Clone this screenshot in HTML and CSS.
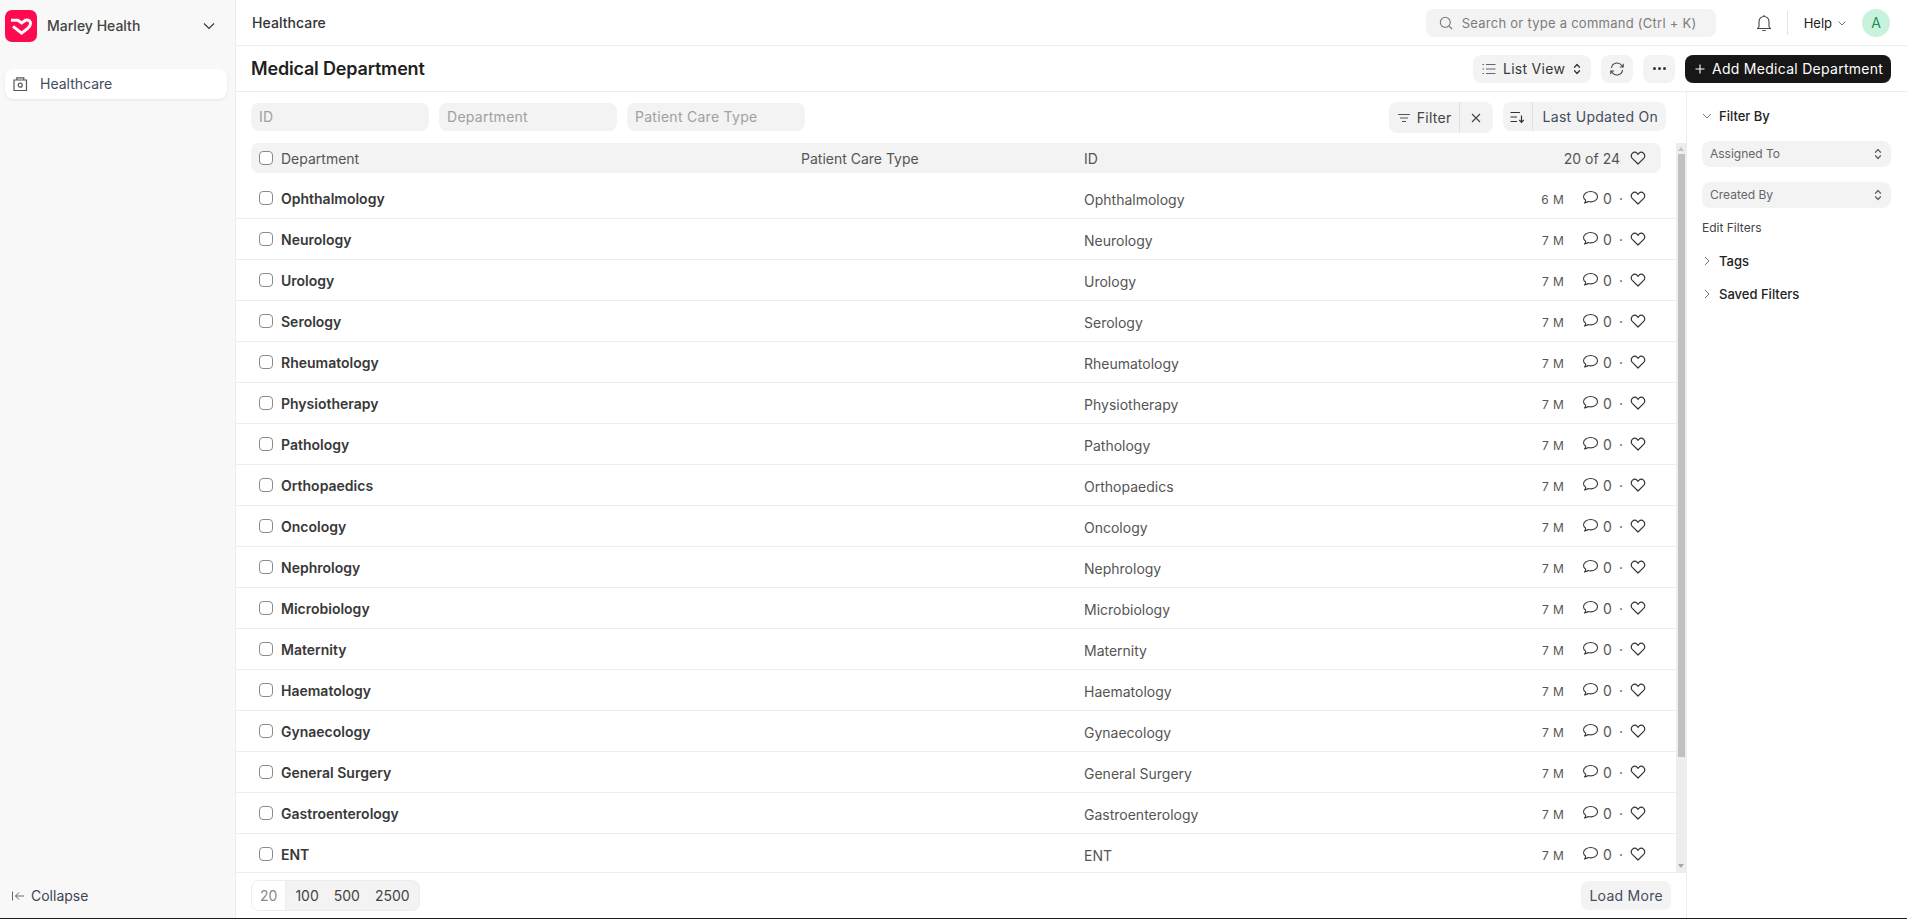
FILE: index.html
```html
<!DOCTYPE html>
<html lang="en">
<head>
<meta charset="utf-8">
<title>Medical Department</title>
<link rel="stylesheet" href="styles.css">
</head>
<body>
<svg class="defs" width="0" height="0" aria-hidden="true">
  <symbol id="i-heart" viewBox="0 0 16 16"><path d="M8 14 2.300 8.400a3.500 3.500 0 0 1 0-5 3.500 3.500 0 0 1 4.900 0l.8.900.8-.9a3.500 3.500 0 0 1 4.900 0 3.500 3.500 0 0 1 0 5L8 14Z" fill="none" stroke="currentColor" stroke-width="1.200" stroke-linejoin="round"/></symbol>
  <symbol id="i-comment" viewBox="0 0 16 16"><path d="M8.700 1.500c3.700 0 6.800 2.300 6.800 5.200s-3.100 5.200-6.800 5.200c-.9 0-1.700-.1-2.500-.4-.8.8-2 1.300-3.700 1.400.8-.9 1.200-1.800 1.200-2.700C2.500 9.300 1.500 8.100 1.500 6.700c0-2.900 3.500-5.200 7.200-5.200Z" fill="none" stroke="currentColor" stroke-width="1.100" stroke-linejoin="round"/></symbol>
  <symbol id="i-updown" viewBox="0 0 12 16"><path d="M3.500 6.200 6 3.500l2.500 2.700M3.500 9.800 6 12.500l2.500-2.700" fill="none" stroke="currentColor" stroke-width="1.300" stroke-linecap="round" stroke-linejoin="round"/></symbol>
  <symbol id="i-check" viewBox="0 0 14 14"><rect x=".5" y=".5" width="13" height="13" rx="3.500" fill="#fff" stroke="#8a8a8a"/></symbol>
</svg>

<div class="app">
  <aside class="sidebar">
    <div class="brand">
      <span class="logo">
        <svg width="32" height="32" viewBox="0 0 32 32"><path d="M6 10.300h6.800l3.900 2.700 3.800-2.800c3.200-.6 5.300 1 5 3.700-.2 1.900-1.500 3.300-3.100 4.700l-5.800 4.600-8.600-6.900" fill="none" stroke="#fff" stroke-width="3"/></svg>
      </span>
      <span class="brand-name">Marley Health</span>
      <svg class="brand-caret" width="16" height="16" viewBox="0 0 16 16"><path d="M3 5.500 8 10.500l5-5" fill="none" stroke="#333" stroke-width="1.100"/></svg>
    </div>
    <div class="side-item">
      <svg width="16" height="16" viewBox="0 0 16 16"><path d="M2 4h12.500v10.500H2zM4.800 4V1.800h7V4" fill="none" stroke="#555" stroke-width="1.200"/><circle cx="8.200" cy="9.200" r="2" fill="none" stroke="#555" stroke-width="1.200"/></svg>
      <span>Healthcare</span>
    </div>
    <div class="collapse">
      <svg width="14" height="14" viewBox="0 0 14 14"><path d="M1.500 2.500v9M13 7H4.500M8 3.500 4.500 7 8 10.500" fill="none" stroke="#666" stroke-width="1"/></svg>
      <span>Collapse</span>
    </div>
  </aside>

  <main class="main">
    <header class="navbar">
      <div class="crumb">Healthcare</div>
      <div class="search">
        <svg width="16" height="16" viewBox="0 0 16 16"><circle cx="7.300" cy="7.300" r="5" fill="none" stroke="#777" stroke-width="1.100"/><path d="m11 11 3 3" stroke="#777" stroke-width="1.100"/></svg>
        <span>Search or type a command (Ctrl + K)</span>
      </div>
      <svg class="bell" width="16" height="18" viewBox="0 0 16 18"><path d="M3 12.500V7.500a5 5 0 0 1 10 0v5l1.500 2h-13L3 12.500ZM6.300 16.500h3.400M8 1v1.500" fill="none" stroke="#444" stroke-width="1.100" stroke-linejoin="round"/></svg>
      <span class="nav-sep"></span>
      <span class="help">Help</span>
      <svg class="help-caret" width="10" height="10" viewBox="0 0 10 10"><path d="M1.500 3.500 5 7l3.500-3.500" fill="none" stroke="#666" stroke-width=".9"/></svg>
      <span class="avatar">A</span>
    </header>

    <div class="pagehead">
      <h1>Medical Department</h1>
      <div class="actions">
        <button class="btn view">
          <svg width="16" height="16" viewBox="0 0 16 16"><path d="M5 3.500h9.500M5 8h9.500M5 12.500h9.500" stroke="#666" stroke-width="1.100"/><path d="M1.500 3.500h1.500M1.500 8h1.500M1.500 12.500h1.500" stroke="#666" stroke-width="1.100"/></svg>
          <span>List View</span>
          <svg class="ud" width="12" height="16"><use href="#i-updown"/></svg>
        </button>
        <button class="btn icon">
          <svg width="16" height="16" viewBox="0 0 16 16"><path d="M2.500 7A5.600 5.600 0 0 1 12.600 4.300L14 6M13.500 9A5.600 5.600 0 0 1 3.400 11.700L2 10M14.200 2.700V6h-3.300M1.800 13.300V10h3.300" fill="none" stroke="#444" stroke-width="1.100"/></svg>
        </button>
        <button class="btn icon dots"><i></i><i></i><i></i></button>
        <button class="btn primary">
          <svg width="12" height="12" viewBox="0 0 12 12"><path d="M6 1.500v9M1.500 6h9" stroke="#fff" stroke-width="1.100"/></svg>
          <span>Add Medical Department</span>
        </button>
      </div>
    </div>

    <div class="body">
      <section class="list">
        <div class="filters">
          <div class="finput">ID</div>
          <div class="finput">Department</div>
          <div class="finput">Patient Care Type</div>
          <div class="filter-right">
            <div class="fgroup">
              <span class="fbtn">
                <svg width="14" height="14" viewBox="0 0 14 14"><path d="M1 3.500h12M3 7h8M5 10.500h4" stroke="#555" stroke-width="1.100"/></svg>
                Filter
              </span>
              <span class="fclear"><svg width="10" height="10" viewBox="0 0 10 10"><path d="m1 1 8 8M9 1 1 9" stroke="#444" stroke-width="1.100"/></svg></span>
            </div>
            <div class="sgroup">
              <span class="sicon"><svg width="16" height="16" viewBox="0 0 16 16"><path d="M1.500 3.500h9.500M1.500 8h6.500M1.500 12.500h6.500" stroke="#333" stroke-width="1.200"/><path d="M12.500 6.500v6.500M10.300 11l2.200 2.300 2.200-2.300" fill="none" stroke="#333" stroke-width="1.200"/></svg></span>
              <span class="stext">Last Updated On</span>
            </div>
          </div>
        </div>

        <div class="table-wrap">
          <div class="thead">
            <svg class="cb" width="14" height="14"><use href="#i-check"/></svg>
            <span class="c-name">Department</span>
            <span class="c-type">Patient Care Type</span>
            <span class="c-id">ID</span>
            <span class="c-count">20 of 24</span>
            <svg class="heart" width="16" height="16"><use href="#i-heart"/></svg>
          </div>
          <div class="rows-area">
            <div class="rows">
              <div class="row"><svg class="cb" width="14" height="14"><use href="#i-check"/></svg><span class="r-name">Ophthalmology</span><span class="r-id">Ophthalmology</span><span class="r-age">6 M</span><svg class="comment" width="16" height="16"><use href="#i-comment"/></svg><span class="r-num">0</span><span class="r-dot">·</span><svg class="heart" width="16" height="16"><use href="#i-heart"/></svg></div>
              <div class="row"><svg class="cb" width="14" height="14"><use href="#i-check"/></svg><span class="r-name">Neurology</span><span class="r-id">Neurology</span><span class="r-age">7 M</span><svg class="comment" width="16" height="16"><use href="#i-comment"/></svg><span class="r-num">0</span><span class="r-dot">·</span><svg class="heart" width="16" height="16"><use href="#i-heart"/></svg></div>
              <div class="row"><svg class="cb" width="14" height="14"><use href="#i-check"/></svg><span class="r-name">Urology</span><span class="r-id">Urology</span><span class="r-age">7 M</span><svg class="comment" width="16" height="16"><use href="#i-comment"/></svg><span class="r-num">0</span><span class="r-dot">·</span><svg class="heart" width="16" height="16"><use href="#i-heart"/></svg></div>
              <div class="row"><svg class="cb" width="14" height="14"><use href="#i-check"/></svg><span class="r-name">Serology</span><span class="r-id">Serology</span><span class="r-age">7 M</span><svg class="comment" width="16" height="16"><use href="#i-comment"/></svg><span class="r-num">0</span><span class="r-dot">·</span><svg class="heart" width="16" height="16"><use href="#i-heart"/></svg></div>
              <div class="row"><svg class="cb" width="14" height="14"><use href="#i-check"/></svg><span class="r-name">Rheumatology</span><span class="r-id">Rheumatology</span><span class="r-age">7 M</span><svg class="comment" width="16" height="16"><use href="#i-comment"/></svg><span class="r-num">0</span><span class="r-dot">·</span><svg class="heart" width="16" height="16"><use href="#i-heart"/></svg></div>
              <div class="row"><svg class="cb" width="14" height="14"><use href="#i-check"/></svg><span class="r-name">Physiotherapy</span><span class="r-id">Physiotherapy</span><span class="r-age">7 M</span><svg class="comment" width="16" height="16"><use href="#i-comment"/></svg><span class="r-num">0</span><span class="r-dot">·</span><svg class="heart" width="16" height="16"><use href="#i-heart"/></svg></div>
              <div class="row"><svg class="cb" width="14" height="14"><use href="#i-check"/></svg><span class="r-name">Pathology</span><span class="r-id">Pathology</span><span class="r-age">7 M</span><svg class="comment" width="16" height="16"><use href="#i-comment"/></svg><span class="r-num">0</span><span class="r-dot">·</span><svg class="heart" width="16" height="16"><use href="#i-heart"/></svg></div>
              <div class="row"><svg class="cb" width="14" height="14"><use href="#i-check"/></svg><span class="r-name">Orthopaedics</span><span class="r-id">Orthopaedics</span><span class="r-age">7 M</span><svg class="comment" width="16" height="16"><use href="#i-comment"/></svg><span class="r-num">0</span><span class="r-dot">·</span><svg class="heart" width="16" height="16"><use href="#i-heart"/></svg></div>
              <div class="row"><svg class="cb" width="14" height="14"><use href="#i-check"/></svg><span class="r-name">Oncology</span><span class="r-id">Oncology</span><span class="r-age">7 M</span><svg class="comment" width="16" height="16"><use href="#i-comment"/></svg><span class="r-num">0</span><span class="r-dot">·</span><svg class="heart" width="16" height="16"><use href="#i-heart"/></svg></div>
              <div class="row"><svg class="cb" width="14" height="14"><use href="#i-check"/></svg><span class="r-name">Nephrology</span><span class="r-id">Nephrology</span><span class="r-age">7 M</span><svg class="comment" width="16" height="16"><use href="#i-comment"/></svg><span class="r-num">0</span><span class="r-dot">·</span><svg class="heart" width="16" height="16"><use href="#i-heart"/></svg></div>
              <div class="row"><svg class="cb" width="14" height="14"><use href="#i-check"/></svg><span class="r-name">Microbiology</span><span class="r-id">Microbiology</span><span class="r-age">7 M</span><svg class="comment" width="16" height="16"><use href="#i-comment"/></svg><span class="r-num">0</span><span class="r-dot">·</span><svg class="heart" width="16" height="16"><use href="#i-heart"/></svg></div>
              <div class="row"><svg class="cb" width="14" height="14"><use href="#i-check"/></svg><span class="r-name">Maternity</span><span class="r-id">Maternity</span><span class="r-age">7 M</span><svg class="comment" width="16" height="16"><use href="#i-comment"/></svg><span class="r-num">0</span><span class="r-dot">·</span><svg class="heart" width="16" height="16"><use href="#i-heart"/></svg></div>
              <div class="row"><svg class="cb" width="14" height="14"><use href="#i-check"/></svg><span class="r-name">Haematology</span><span class="r-id">Haematology</span><span class="r-age">7 M</span><svg class="comment" width="16" height="16"><use href="#i-comment"/></svg><span class="r-num">0</span><span class="r-dot">·</span><svg class="heart" width="16" height="16"><use href="#i-heart"/></svg></div>
              <div class="row"><svg class="cb" width="14" height="14"><use href="#i-check"/></svg><span class="r-name">Gynaecology</span><span class="r-id">Gynaecology</span><span class="r-age">7 M</span><svg class="comment" width="16" height="16"><use href="#i-comment"/></svg><span class="r-num">0</span><span class="r-dot">·</span><svg class="heart" width="16" height="16"><use href="#i-heart"/></svg></div>
              <div class="row"><svg class="cb" width="14" height="14"><use href="#i-check"/></svg><span class="r-name">General Surgery</span><span class="r-id">General Surgery</span><span class="r-age">7 M</span><svg class="comment" width="16" height="16"><use href="#i-comment"/></svg><span class="r-num">0</span><span class="r-dot">·</span><svg class="heart" width="16" height="16"><use href="#i-heart"/></svg></div>
              <div class="row"><svg class="cb" width="14" height="14"><use href="#i-check"/></svg><span class="r-name">Gastroenterology</span><span class="r-id">Gastroenterology</span><span class="r-age">7 M</span><svg class="comment" width="16" height="16"><use href="#i-comment"/></svg><span class="r-num">0</span><span class="r-dot">·</span><svg class="heart" width="16" height="16"><use href="#i-heart"/></svg></div>
              <div class="row"><svg class="cb" width="14" height="14"><use href="#i-check"/></svg><span class="r-name">ENT</span><span class="r-id">ENT</span><span class="r-age">7 M</span><svg class="comment" width="16" height="16"><use href="#i-comment"/></svg><span class="r-num">0</span><span class="r-dot">·</span><svg class="heart" width="16" height="16"><use href="#i-heart"/></svg></div>
            </div>
            <div class="scrollbar">
              <span class="arrow up"></span>
              <span class="thumb"></span>
              <span class="arrow down"></span>
            </div>
          </div>
        </div>

        <div class="footer">
          <div class="pager">
            <span class="p-on">20</span><span>100</span><span>500</span><span>2500</span>
          </div>
          <button class="btn more">Load More</button>
        </div>
      </section>

      <aside class="panel">
        <div class="panel-head open">
          <svg width="10" height="10" viewBox="0 0 10 10"><path d="M1 3 5 7l4-4" fill="none" stroke="#666" stroke-width=".9"/></svg>
          <span>Filter By</span>
        </div>
        <div class="pselect">Assigned To<svg width="12" height="16"><use href="#i-updown"/></svg></div>
        <div class="pselect">Created By<svg width="12" height="16"><use href="#i-updown"/></svg></div>
        <div class="edit">Edit Filters</div>
        <div class="panel-head tags">
          <svg width="10" height="10" viewBox="0 0 10 10"><path d="m3 1 4 4-4 4" fill="none" stroke="#666" stroke-width=".9"/></svg>
          <span>Tags</span>
        </div>
        <div class="panel-head saved">
          <svg width="10" height="10" viewBox="0 0 10 10"><path d="m3 1 4 4-4 4" fill="none" stroke="#666" stroke-width=".9"/></svg>
          <span>Saved Filters</span>
        </div>
      </aside>
    </div>
  </main>
</div>
</body>
</html>
```

FILE: styles.css
```css
* { box-sizing: border-box; }
html, body { margin: 0; height: 100%; overflow: hidden; }
body { font-family: Inter, "Liberation Sans", sans-serif; color: #383838; background: #1c1c1c; font-size: 14px; }
.defs { position: absolute; }
button { font: inherit; border: 0; cursor: pointer; }

.app { display: flex; height: 918px; background: #fff; }

.sidebar { width: 236px; flex: none; background: #f8f8f8; border-right: 1px solid #ededed; padding: 10px 5px 0; display: flex; flex-direction: column; }
.brand { display: flex; align-items: center; height: 32px; }
.logo { width: 32px; height: 32px; border-radius: 7px; background: #ff0a50; display: block; }
.logo svg { display: block; }
.brand-name { margin-left: 10px; padding-bottom: 1px; font-size: 14px; font-weight: 500; color: #444; }
.brand-caret { margin-left: auto; margin-right: 13px; }
.side-item { margin-top: 27px; height: 30px; width: 222px; background: #fff; border-radius: 8px; box-shadow: 0 1px 3px rgba(0,0,0,.08); display: flex; align-items: center; padding: 0 0 1px 7px; gap: 12px; color: #444c5c; font-size: 14px; }
.collapse { margin-top: auto; margin-bottom: 14px; margin-left: 6px; display: flex; align-items: center; gap: 6px; color: #3c4454; font-size: 14px; }

.main { flex: 1; min-width: 0; display: flex; flex-direction: column; }

.navbar { height: 46px; flex: none; border-bottom: 1px solid #ededed; display: flex; align-items: center; padding-left: 16px; }
.crumb { font-size: 14px; font-weight: 500; color: #333; letter-spacing: .005em; }
.search { margin-left: auto; width: 290px; height: 28px; border-radius: 8px; background: #f3f3f3; display: flex; align-items: center; gap: 8px; padding-left: 12px; font-size: 13px; color: #7c7c7c; letter-spacing: .02em; }
.bell { margin-left: 40px; }
.nav-sep { width: 1px; height: 24px; background: #e2e2e2; margin-left: 15px; }
.help { margin-left: 16px; font-size: 13px; color: #222; }
.help-caret { margin-left: 5px; }
.avatar { margin-left: 15px; margin-right: 17px; width: 28px; height: 28px; border-radius: 50%; background: #c9f2dc; color: #1b8f58; font-size: 14px; display: flex; align-items: center; justify-content: center; }

.pagehead { height: 46px; flex: none; border-bottom: 1px solid #ededed; display: flex; align-items: center; justify-content: space-between; padding: 0 16px 0 15px; }
h1 { margin: 0; font-size: 18px; font-weight: 600; color: #1f1f1f; letter-spacing: -.01em; }
.actions { display: flex; gap: 10px; }
.btn { height: 28px; border-radius: 8px; background: #f3f3f3; color: #383838; display: flex; align-items: center; font-size: 14px; padding: 0; letter-spacing: .02em; }
.view { width: 118px; padding-left: 8px; gap: 6px; }
.icon { width: 32px; justify-content: center; }
.dots { gap: 2px; }
.dots i { width: 3px; height: 3px; border-radius: 50%; background: #333; }
.primary { width: 206px; background: #171717; color: #fff; padding-left: 9px; gap: 6px; }

.body { flex: 1; min-height: 0; display: flex; }
.list { flex: 1; min-width: 0; display: flex; flex-direction: column; }

.filters { height: 51px; flex: none; display: flex; align-items: flex-start; padding: 10px 20px 0 15px; gap: 10px; }
.finput { width: 178px; height: 28px; margin-top: 1px; border-radius: 8px; background: #f3f3f3; color: #a0a0a0; padding-left: 8px; line-height: 28px; font-size: 14px; letter-spacing: .02em; }
.filter-right { margin-left: auto; display: flex; gap: 10px; letter-spacing: .02em; }
.fgroup { display: flex; height: 31px; border-radius: 8px; background: #f3f3f3; color: #444; }
.fbtn { display: flex; align-items: center; gap: 6px; padding: 0 7px 0 8px; border-right: 1px solid #e0e0e0; }
.fclear { width: 33px; display: flex; align-items: center; justify-content: center; }
.sgroup { display: flex; height: 29px; border-radius: 8px; background: #f3f3f3; }
.sicon { width: 30px; display: flex; align-items: center; justify-content: center; border-right: 1px solid #e0e0e0; }
.stext { padding: 0 8px 0 10px; line-height: 29px; color: #444c5c; }

.table-wrap { flex: 1; min-height: 0; display: flex; flex-direction: column; overflow: hidden; }
.thead { height: 30px; flex: none; margin: 0 25px 0 15px; border-radius: 8px; background: #f3f3f3; display: flex; align-items: center; padding-left: 8px; color: #555; }
.c-name { margin-left: 8px; width: 520px; }
.c-type { width: 283px; }
.c-count { margin-left: auto; margin-right: 10px; }
.thead .heart { margin-right: 15px; color: #333; }

.rows-area { flex: 1; min-height: 0; position: relative; overflow: hidden; margin-top: -30px; padding-top: 30px; }
.rows { height: 100%; overflow: hidden; margin-right: 10px; padding-top: 5px; }
.row { height: 41px; border-bottom: 1px solid #ededed; display: flex; align-items: center; padding-left: 23px; }
.row .cb { margin-top: -1px; }
.r-name { margin-left: 8px; width: 803px; font-weight: 600; color: #383838; }
.r-id { color: #555; margin-top: 2px; }
.r-age { margin-left: auto; font-size: 12px; letter-spacing: .03em; color: #555; margin-right: 18px; margin-top: 2px; }
.comment { color: #3c3c3c; margin-top: -1px; }
.r-num { margin-left: 5px; color: #555; }
.r-dot { margin-left: 7px; margin-right: 7px; color: #555; }
.row .heart { margin-right: 30px; color: #333; }

.scrollbar { position: absolute; right: 0; top: 0; bottom: 0; width: 10px; background: #ededed; }
.thumb { position: absolute; left: 2px; right: 1px; top: 11px; height: 603px; background: #c1c1c1; }
.arrow { position: absolute; left: 2px; width: 0; height: 0; border-left: 3.500px solid transparent; border-right: 3.500px solid transparent; }
.arrow.up { top: 4px; border-bottom: 4px solid #c4c4c4; }
.arrow.down { bottom: 4px; border-top: 4px solid #a8a8a8; }

.footer { height: 46px; flex: none; border-top: 1px solid #ededed; display: flex; align-items: center; justify-content: space-between; padding: 0 15px; }
.pager { display: flex; height: 31px; border-radius: 8px; background: #f3f3f3; color: #444; border: 1px solid #ededed; align-items: center; overflow: hidden; }
.pager span { padding: 0 8px 0 7px; line-height: 29px; }
.pager span:nth-child(2) { padding-left: 9px; }
.pager span:last-child { padding-right: 9px; }
.pager .p-on { background: #fff; color: #888; border-right: 1px solid #ededed; padding: 0 8px; }
.more { padding: 0 8px; height: 29px; color: #444c5c; }

.panel { width: 221px; flex: none; border-left: 1px solid #ededed; padding: 0 16px 0 15px; }
.panel-head { display: flex; align-items: center; gap: 7px; font-size: 13px; font-weight: 500; color: #222; }
.panel-head.open { margin-top: 15px; height: 18px; }
.pselect { margin-top: 15px; height: 26px; border-radius: 8px; background: #f3f3f3; display: flex; align-items: center; justify-content: space-between; padding: 0 7px 1px 8px; font-size: 12px; color: #666; }
.panel-head.open + .pselect { margin-top: 16px; }
.edit { margin-top: 12px; font-size: 12px; color: #444; line-height: 15px; }
.tags { margin-top: 18px; height: 16px; }
.saved { margin-top: 17px; height: 16px; }
```
